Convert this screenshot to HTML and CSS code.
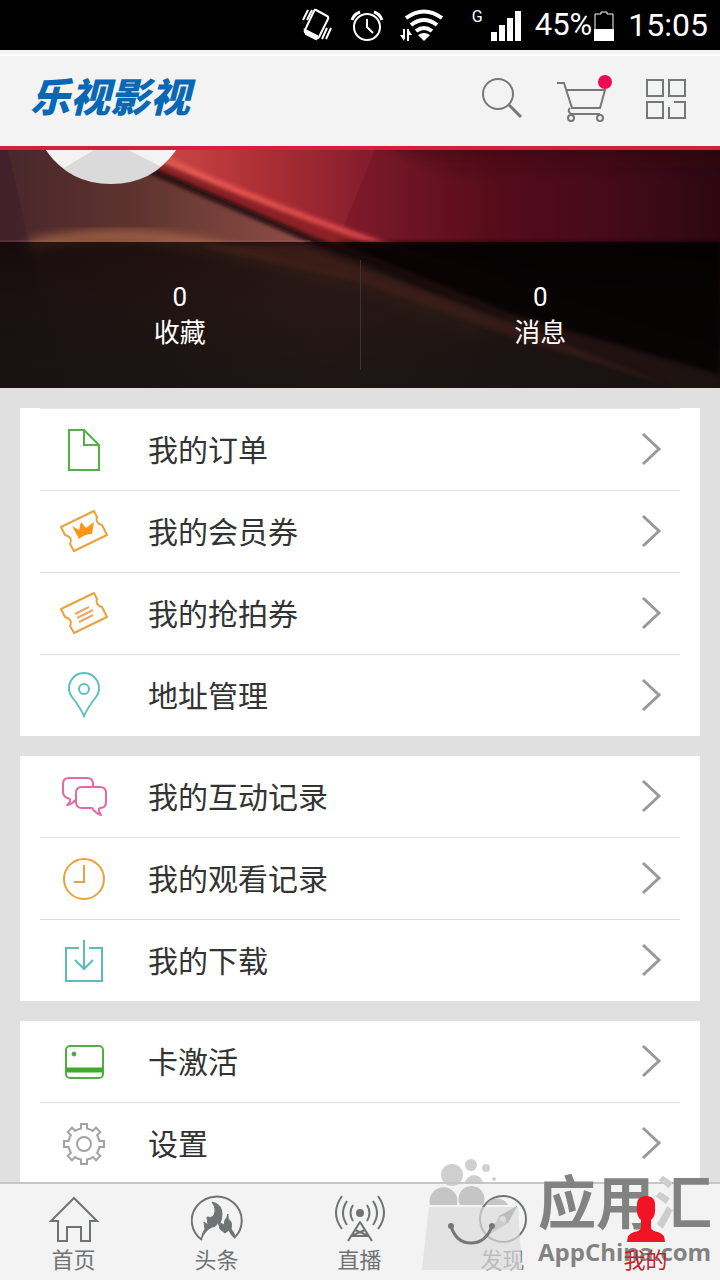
FILE: index.html
```html
<!DOCTYPE html>
<html lang="zh-CN">
<head>
<meta charset="utf-8">
<meta name="viewport" content="width=device-width, initial-scale=1">
<title>乐视影视</title>
<link rel="stylesheet" href="styles.css">
</head>
<body>
<svg class="defs" aria-hidden="true">
  <symbol id="chevron" viewBox="0 0 24 36"><path d="M4 3L20 18L4 33" fill="none" stroke="#999" stroke-width="3"/></symbol>
  <symbol id="ticket" viewBox="0 0 48 48"><path d="M1 20L34 4L37 10Q35 16 42 18L47 28L14 44L10 37Q13 30 5 28Z" fill="none" stroke="#eba23c" stroke-width="2" stroke-linejoin="round"/></symbol>
</svg>
<div class="app">
  <div class="status">
    <svg class="vibrate" viewBox="0 0 32 36" fill="none" stroke="#fff" stroke-width="2"><path d="M14 3L25 9Q27 10 26 12L17 30Q16 32 14 31L4 26Q2 25 3 23L12 4Q13 2 14 3Z"/><path d="M3 23L15 29L14 32L4 27Z" fill="#fff"/><path d="M6 3L1 13M10 3L5 13M29 21L24 32M25 21L20 32"/></svg>
    <svg class="alarm" viewBox="0 0 34 36" fill="none" stroke="#fff" stroke-width="2"><circle cx="17" cy="20" r="13"/><path d="M17 12V20L23 26"/><path d="M2 13Q4 7 10 5M32 13Q30 7 24 5" stroke-width="3"/></svg>
    <svg class="wifi" viewBox="0 0 44 36" fill="none" stroke="#fff" stroke-width="4"><path d="M6 11Q24-2 42 11M11 18Q24 8 37 18M16 24Q24 18 32 24"/><path d="M18 28Q24 24 30 28L24 34Z" fill="#fff" stroke="none"/><path d="M4 22V32M8 22V34" stroke-width="2"/><path d="M0 28L4 34L5 28ZM8 22L12 28H8Z" fill="#fff" stroke="none"/></svg>
    <span class="network">G</span>
    <svg class="signal" viewBox="0 0 30 36" fill="#fff"><path d="M0 25H6V34H0ZM8 18H14V34H8ZM16 11H22V34H16ZM24 4H30V34H24Z"/></svg>
    <span class="battery-text">45%</span>
    <svg class="battery" viewBox="0 0 20 36"><path d="M1 33V7H7V5H13V7H19V33Z" fill="none" stroke="#fff" stroke-width="1"/><path d="M0 22H20V34H0Z" fill="#fff"/></svg>
    <time class="clock">15:05</time>
  </div>
  <header class="header">
    <h1 class="logo">乐视影视</h1>
    <div class="actions">
      <button aria-label="搜索"><svg width="44" height="48" viewBox="0 0 44 48" fill="none" stroke="#747878" stroke-width="2"><circle cx="18" cy="19" r="15"/><path d="M29 30L41 42" stroke-width="3"/></svg></button>
      <button aria-label="购物车"><svg width="60" height="48" viewBox="0 0 60 48" fill="none" stroke="#747878" stroke-width="2"><path d="M3 8H10L18 33H46L51 15H13M16 33Q13 36 17 39H46"/><circle cx="17" cy="43" r="3"/><circle cx="46" cy="43" r="3"/><circle cx="51" cy="7" r="7" fill="#ec0b50" stroke="none"/></svg></button>
      <button aria-label="扫一扫"><svg width="44" height="48" viewBox="0 0 44 48" fill="none" stroke="#747878" stroke-width="2"><path d="M3 5H19V21H3ZM25 5H41V21H25ZM3 27H19V43H3ZM30 27H41V43H25V32"/></svg></button>
    </div>
  </header>
  <main class="content">
    <section class="hero">
      <svg class="hero-art" viewBox="0 0 720 238" preserveAspectRatio="none" aria-hidden="true">
        <defs>
          <linearGradient id="base"><stop offset="0" stop-color="#48262b"/><stop offset=".2" stop-color="#60352f"/><stop offset=".45" stop-color="#96504a"/><stop offset="1" stop-color="#301612"/></linearGradient>
          <linearGradient id="red"><stop offset="0" stop-color="#d04a46"/><stop offset=".2" stop-color="#ac2f35"/><stop offset=".38" stop-color="#861d2c"/><stop offset=".6" stop-color="#5c0e1c"/><stop offset=".8" stop-color="#470c1b"/><stop offset="1" stop-color="#2a0911"/></linearGradient>
          <linearGradient id="down" x1="0" y1="0" x2="0" y2="1"><stop offset="0" stop-color="#220a10" stop-opacity=".4"/><stop offset=".4" stop-color="#220a10" stop-opacity="0"/></linearGradient>
          <linearGradient id="low" x1="0" y1="0" x2="0" y2="1"><stop offset="0" stop-color="#0a0404" stop-opacity=".76"/><stop offset=".4" stop-color="#140e0d" stop-opacity=".85"/><stop offset="1" stop-color="#141210" stop-opacity=".93"/></linearGradient>
          <linearGradient id="edge"><stop offset="0" stop-color="#f06055"/><stop offset=".5" stop-color="#d9464a"/><stop offset="1" stop-color="#5a1018"/></linearGradient>
          <filter id="soft1"><feGaussianBlur stdDeviation="2"/></filter>
          <filter id="soft2"><feGaussianBlur stdDeviation="6"/></filter>
        </defs>
        <path d="M0 0H720V238H0Z" fill="url(#base)"/>
        <path d="M0 0H8L62 238H0Z" fill="#3c1c2c" opacity=".5"/>
        <path d="M30 96Q110 78 200 94L340 130L480 180" fill="none" stroke="#b8704c" stroke-width="9" filter="url(#soft2)"/>
        <path d="M150 0H720V238H670L505 170L358 107Z" fill="url(#red)"/>
        <path d="M375 0H720V150L340 85Z" fill="#420718" opacity=".18"/>
        <path d="M150 8L376 92L480 124L720 200V238H670L505 170L358 107L312 90L151 20Z" fill="#8c2127" filter="url(#soft1)"/>
        <path d="M162 9Q275 58 376 92T560 140" fill="none" stroke="url(#edge)" stroke-width="6" filter="url(#soft1)"/>
        <path d="M145 18L312 90L358 107L505 170" fill="none" stroke="#1c0709" stroke-width="6" filter="url(#soft1)"/>
        <path d="M380 -12H740V92H560Z" fill="url(#down)" filter="url(#soft2)"/>
        <path d="M0 92H720V238H0Z" fill="url(#low)"/>
        <path d="M360 92H720V225L505 162L335 92Z" fill="#050000" opacity=".75" filter="url(#soft1)"/>
        <path d="M300 96L505 170L670 236L505 184L358 132L200 96Z" fill="#54271c" opacity=".4" filter="url(#soft1)"/>
        <path d="M0 91H310" stroke="#946c61" stroke-width="1" opacity=".5"/>
      </svg>
      <div class="profile">
        <svg class="avatar" viewBox="0 0 130 34" role="img" aria-label="头像"><path d="M0 0H130Q107 34 65 34T0 0Z" fill="#dadada"/><path d="M0 0H48L18 18Q7 11 0 0ZM82 0H130Q124 9 114 16Z" fill="#f3f3f2"/></svg>
      </div>
      <div class="stats">
        <a href="#favorites" class="stat"><span>0</span><span>收藏</span></a>
        <a href="#messages" class="stat"><span>0</span><span>消息</span></a>
      </div>
    </section>
    <nav class="menu" aria-label="我的">
      <div class="card card-lined">
        <a href="#orders" class="row"><svg class="icon" viewBox="0 0 48 48" fill="none" stroke="#55ae4a" stroke-width="2"><path d="M9 5H24L39 20V45H9ZM24 5V20H39"/></svg><span class="label">我的订单</span><svg class="go"><use href="#chevron"/></svg></a>
        <a href="#vip" class="row"><svg class="icon" viewBox="0 0 48 48"><use href="#ticket"/><path d="M12 19L19 23L21 15L26 21L34 15L32 27Q25 27 19 32Z" fill="#ff9514"/></svg><span class="label">我的会员券</span><svg class="go"><use href="#chevron"/></svg></a>
        <a href="#coupons" class="row"><svg class="icon" viewBox="0 0 48 48"><use href="#ticket"/><path d="M15 25L29 18M17 29L33 21M19 33L33 26" stroke="#eba860" stroke-width="2"/></svg><span class="label">我的抢拍券</span><svg class="go"><use href="#chevron"/></svg></a>
        <a href="#address" class="row"><svg class="icon" viewBox="0 0 48 48" fill="none" stroke="#5bc2bd" stroke-width="2"><path d="M24 45Q20 36 12 26A15 15 0 1 1 36 26Q28 36 24 45Z"/><circle cx="24" cy="18" r="5"/></svg><span class="label">地址管理</span><svg class="go"><use href="#chevron"/></svg></a>
      </div>
      <div class="card">
        <a href="#interactions" class="row"><svg class="icon" viewBox="0 0 48 48" fill="none" stroke="#e268a8" stroke-width="2" stroke-linejoin="round"><path d="M33 15V12Q33 6 27 6H9Q3 6 3 12V20Q3 25 10 27Q11 30 7 33Q13 32 15 28"/><path d="M22 15H40Q46 15 46 21V30Q46 36 40 36Q37 37 41 43Q35 41 32 36H22Q16 36 16 30V21Q16 15 22 15Z"/></svg><span class="label">我的互动记录</span><svg class="go"><use href="#chevron"/></svg></a>
        <a href="#history" class="row"><svg class="icon" viewBox="0 0 48 48" fill="none" stroke="#eba23c" stroke-width="2"><circle cx="24" cy="25" r="20"/><path d="M24 11V28H14"/></svg><span class="label">我的观看记录</span><svg class="go"><use href="#chevron"/></svg></a>
        <a href="#downloads" class="row"><svg class="icon" viewBox="0 0 48 48" fill="none" stroke="#5bbdba" stroke-width="2"><path d="M19 12H6V45H42V12H29M24 4V33M15 24L24 33L33 24"/></svg><span class="label">我的下载</span><svg class="go"><use href="#chevron"/></svg></a>
      </div>
      <div class="card">
        <a href="#activate" class="row"><svg class="icon" viewBox="0 0 48 48" fill="none" stroke="#52ad45" stroke-width="2"><rect x="6" y="9" width="37" height="32" rx="4"/><path d="M6 33H43" stroke="#3faa2c" stroke-width="5"/><circle cx="14" cy="17" r="2" fill="#3faa2c" stroke-width="1"/></svg><span class="label">卡激活</span><svg class="go"><use href="#chevron"/></svg></a>
        <a href="#settings" class="row"><svg class="icon" viewBox="-24 -25 48 48" fill="none" stroke="#a3a3a3" stroke-width="2"><path d="M-3-20H3V-15.5Q6-15 8.8-13.1L12-16.3 16.3-12 13.1-8.8Q15-6 15.5-3H20V3H15.5Q15 6 13.1 8.8L16.3 12 12 16.3 8.8 13.1Q6 15 3 15.5V20H-3V15.5Q-6 15-8.8 13.1L-12 16.3-16.3 12-13.1 8.8Q-15 6-15.5 3H-20V-3H-15.5Q-15-6-13.1-8.8L-16.3-12-12-16.3-8.8-13.1Q-6-15-3-15.5Z"/><circle r="7"/></svg><span class="label">设置</span><svg class="go"><use href="#chevron"/></svg></a>
      </div>
    </nav>
  </main>
  <nav class="tabs" aria-label="主导航">
    <a href="#home" class="tab"><svg viewBox="0 0 52 52" fill="none" stroke="#6f7374" stroke-width="2"><path d="M26 6L49 29H42V49H33V35H19V49H10V29H3Z"/></svg><span>首页</span></a>
    <a href="#headlines" class="tab"><svg viewBox="0 0 52 52"><path d="M11 48A25 24 0 1 1 43 46" fill="none" stroke="#6f7374" stroke-width="2"/><path d="M10 48Q11 41 14 37L13 30L17 33L16 25Q23 27 24 20Q25 15 21 10Q31 12 31 22Q31 27 29 31L33 33L34 28Q36 26 37 22Q36 27 40 30Q41 34 40 37Q44 41 44 46Q40 44 38 38L34 41L29 37L27 29Q26 35 21 35Q14 38 10 48Z" fill="#6f7374" stroke="#6f7374" stroke-linejoin="round"/></svg><span>头条</span></a>
    <a href="#live" class="tab"><svg viewBox="0 0 52 52" fill="none" stroke="#6f7374" stroke-width="2"><circle cx="26" cy="21" r="4" fill="#6f7374" stroke="none"/><path d="M19 13Q14 21 19 29M13 9Q5 21 13 33M8 4Q-4 21 8 37M33 13Q38 21 33 29M39 9Q47 21 39 33M44 4Q56 21 44 37"/><path d="M14 49L26 30L38 49M21 38L35 44M31 38L17 44L35 44" stroke-linejoin="round"/></svg><span>直播</span></a>
    <a href="#discover" class="tab"><svg viewBox="0 0 52 52"><circle cx="26" cy="27" r="23" fill="none" stroke="#6f7374" stroke-width="2"/><path d="M40 14L31 31L13 42L22 24Z" fill="#a7a9a9"/><path d="M40 14L31 31L22 24Z" fill="#73797a"/><circle cx="26" cy="27" r="3" fill="#ddd"/></svg><span>发现</span></a>
    <a href="#me" class="tab tab-active" aria-current="page"><svg viewBox="0 0 52 52" fill="#f01424"><path d="M26 4Q36 4 35 15Q36 24 31 28V36Q32 39 38 40Q45 42 45 50H7Q7 42 14 40Q20 39 21 36V28Q16 24 17 15Q16 4 26 4Z"/></svg><span>我的</span></a>
    <div class="mark">
      <svg class="bag" viewBox="0 0 110 112" aria-hidden="true"><g fill="#c4c4c4" opacity=".8"><circle cx="30" cy="17" r="11"/><circle cx="49" cy="7" r="6"/><circle cx="64" cy="10" r="4"/><circle cx="72" cy="21" r="2"/><path d="M43 26A9 9 0 0 1 61 26Z"/></g><g fill="#bcbcbc" opacity=".85"><path d="M8 47A14 14 0 1 1 35 47ZM38 47A13 13 0 1 1 61 47ZM64 47A12 11 0 0 1 86 47Z"/></g><path d="M7 49H96L100 112H0Z" fill="#dcdcdc" opacity=".7"/><path d="M29 68Q34 85 49 85Q64 85 70 68" fill="none" stroke="#777" stroke-width="3"/><circle cx="29" cy="68" r="3" fill="#777"/><circle cx="70" cy="68" r="3" fill="#777"/></svg>
      <div class="mark-text"><span class="mark-name">应用<span class="mark-drop">汇</span></span><span class="mark-url">AppChina.com</span></div>
    </div>
  </nav>
</div>
</body>
</html>
```

FILE: styles.css
```css
* { box-sizing: border-box; }
body {
  margin: 0;
  background: #e0e0e0;
  color: #333;
  font-family: Roboto, "Noto Sans CJK SC", sans-serif;
}
a { color: inherit; text-decoration: none; }
svg { display: block; }
.defs { position: absolute; width: 0; height: 0; }
.app { display: flex; flex-direction: column; height: 100vh; overflow: hidden; }

.status {
  display: flex;
  flex: none;
  align-items: center;
  justify-content: flex-end;
  height: 50px;
  padding-right: 12px;
  background: #000;
  color: #fff;
  font-size: 32px;
  line-height: 50px;
}
.status svg { height: 36px; }
.vibrate { width: 32px; margin-right: 16px; }
.alarm { width: 34px; margin-right: 16px; }
.wifi { width: 44px; margin-right: 28px; }
.network { align-self: flex-start; font-size: 16px; line-height: 34px; }
.signal { width: 30px; margin-left: 8px; }
.battery-text { margin: 0 2px 0 14px; font-size: 31px; }
.battery { width: 20px; }
.clock { margin-left: 14px; }

.header {
  display: flex;
  flex: none;
  align-items: center;
  justify-content: space-between;
  height: 100px;
  padding: 2px 32px 0 30px;
  border-bottom: 4px solid #d71f3c;
  background: linear-gradient(#f2f2f2 4px, #fff 4px, #fff 6px, #f2f3f2 6px);
}
.logo {
  margin: 0;
  color: #0968b3;
  font-size: 40px;
  font-style: italic;
  font-weight: 900;
  line-height: 48px;
}
.actions { display: flex; gap: 30px; }
.actions button { padding: 0; border: 0; background: none; }

.content { flex: 1; min-height: 0; overflow: hidden; }
.hero { position: relative; }
.hero-art { position: absolute; inset: 0; width: 100%; height: 100%; }
.profile { position: relative; height: 92px; padding-left: 46px; }
.avatar { width: 130px; height: 34px; }
.stats { position: relative; display: flex; height: 146px; padding: 18px 0; }
.stat {
  display: flex;
  flex: 1;
  flex-direction: column;
  align-items: center;
  justify-content: center;
  color: #fff;
  font-size: 26px;
  line-height: 36px;
}
.stat + .stat { border-left: 1px solid #3d3431; }

.menu { display: flex; flex-direction: column; gap: 20px; padding: 20px; }
.card { padding: 0 20px; background: #fff; }
.card-lined .row:first-child { border-top: 1px solid #e8e8e8; }
.row { display: flex; align-items: center; padding: 16px 17px 17px 20px; font-size: 30px; line-height: 44px; }
.row + .row { border-top: 1px solid #dedede; }
.icon { width: 48px; height: 48px; margin-right: 40px; }
.label { flex: 1; padding-top: 4px; }
.go { width: 24px; height: 36px; }

.tabs {
  position: relative;
  display: flex;
  flex: none;
  height: 98px;
  padding: 0 3px 0 2px;
  border-top: 2px solid #c5c6c5;
  background: #f2f3f2;
}
.tab {
  display: flex;
  flex: 1;
  flex-direction: column;
  align-items: center;
  padding-top: 8px;
  color: #707374;
  font-size: 22px;
  line-height: 34px;
}
.tab svg { width: 52px; height: 52px; }
.tab-active { position: relative; z-index: 2; color: #c8202e; }
.mark {
  position: absolute;
  z-index: 1;
  right: 8px;
  bottom: 10px;
  display: flex;
  align-items: flex-end;
  gap: 6px;
  color: #828282;
  pointer-events: none;
}
.bag { width: 110px; height: 112px; }
.mark-text { display: flex; flex-direction: column; }
.mark-name { font-size: 58px; font-weight: 700; line-height: 60px; }
.mark-drop {
  background: linear-gradient(90deg, #cdcdcd 18px, #828282 18px);
  background-clip: text;
  color: transparent;
}
.mark-url { font-family: "Open Sans", sans-serif; font-size: 24px; font-weight: 700; line-height: 36px; }
```
